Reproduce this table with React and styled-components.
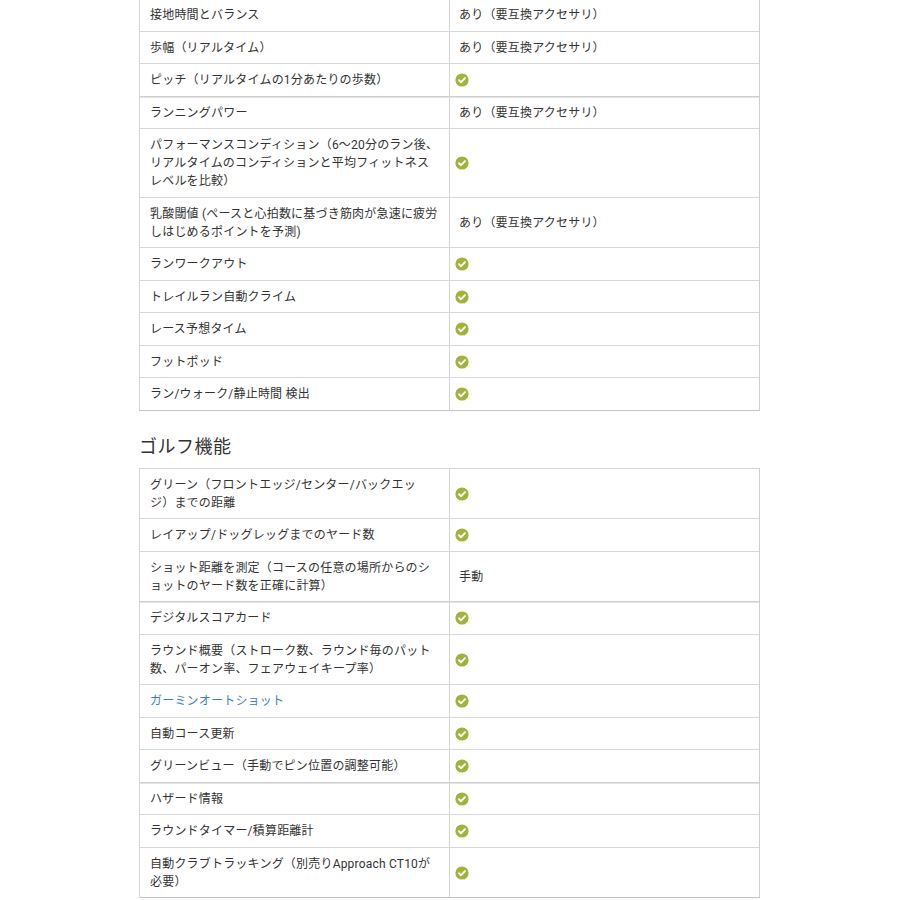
import styled, { createGlobalStyle } from "styled-components"

const GlobalStyle = createGlobalStyle`
    body {
        margin: 0;
        background: #fff;
        font-family: Roboto, "Noto Sans CJK JP", sans-serif;
        color: #333;
    }
`

// line breaks follow the original page's wrapping
const running = [
    { label: "接地時間とバランス", value: "あり（要互換アクセサリ）" },
    { label: "歩幅（リアルタイム）", value: "あり（要互換アクセサリ）" },
    { label: "ピッチ（リアルタイムの1分あたりの歩数）", value: true },
    { label: "ランニングパワー", value: "あり（要互換アクセサリ）", split: true },
    { label: "パフォーマンスコンディション（6〜20分のラン後、\nリアルタイムのコンディションと平均フィットネス\nレベルを比較）", value: true },
    { label: "乳酸閾値 (ペースと心拍数に基づき筋肉が急速に疲労\nしはじめるポイントを予測)", value: "あり（要互換アクセサリ）" },
    { label: "ランワークアウト", value: true },
    { label: "トレイルラン自動クライム", value: true },
    { label: "レース予想タイム", value: true },
    { label: "フットポッド", value: true },
    { label: "ラン/ウォーク/静止時間 検出", value: true },
]

const golf = [
    { label: "グリーン（フロントエッジ/センター/バックエッ\nジ）までの距離", value: true },
    { label: "レイアップ/ドッグレッグまでのヤード数", value: true },
    { label: "ショット距離を測定（コースの任意の場所からのシ\nョットのヤード数を正確に計算）", value: "手動" },
    { label: "デジタルスコアカード", value: true, split: true },
    { label: "ラウンド概要（ストローク数、ラウンド毎のパット\n数、パーオン率、フェアウェイキープ率）", value: true },
    { label: "ガーミンオートショット", value: true, link: true },
    { label: "自動コース更新", value: true },
    { label: "グリーンビュー（手動でピン位置の調整可能）", value: true },
    { label: "ハザード情報", value: true, split: true },
    { label: "ラウンドタイマー/積算距離計", value: true },
    { label: "自動クラブトラッキング（別売りApproach CT10が\n必要）", value: true },
]

const Page = styled.div`
    width: 621px;
    margin: -2px 0 0 139px;
`

const Table = styled.div`
    border: 1px solid #d4d4d4;
    border-bottom-color: #c4c4c4;
    border-right-color: #cfcfcf;
`

const Row = styled.div`
    display: grid;
    grid-template-columns: 309px 1fr;
    border-top: 1px solid ${props => props.split ? "#cfcfcf" : "#d8d8d8"};
    box-shadow: ${props => props.split ? "inset 0 1px 0 #e4e4e4" : "none"};
    &:first-child {
        border-top: none;
    }
`

const Cell = styled.div`
    display: flex;
    align-items: center;
    padding: 7px 4px 6.5px 10px;
    font-size: 12px;
    line-height: 18px;
    letter-spacing: 0.2px;
    color: #333;
    white-space: pre-line;
    & + & {
        border-left: 1px solid #d4d4d4;
        padding-left: 9px;
    }
`

const Link = styled.a`
    color: #3b7fbf;
    text-decoration: none;
`

const Heading = styled.h2`
    margin: 24px 0 9px;
    font-size: 18px;
    font-weight: 400;
    line-height: 24px;
    color: #333;
    letter-spacing: 0.5px;
`

const CheckIcon = styled.svg`
    margin-left: -4px;
    flex: none;
`

const Check = () => (
    <CheckIcon width="14" height="14" viewBox="0 0 14 14">
        <circle cx="7" cy="7" r="6.6" fill="#a2b23a" />
        <path d="M4 7.2 L6.1 9.2 L10 5.1" fill="none" stroke="#fff" strokeWidth="1.9" strokeLinecap="round" strokeLinejoin="round" />
    </CheckIcon>
)

const FeatureTable = (props) => (
    <Table>
        {props.rows.map(row => (
            <Row key={row.label} split={row.split}>
                <Cell>{row.link ? <Link href="#">{row.label}</Link> : row.label}</Cell>
                <Cell>{row.value === true ? <Check /> : row.value}</Cell>
            </Row>
        ))}
    </Table>
)

const App = () => (
    <Page>
        <GlobalStyle />
        <FeatureTable rows={running} />
        <Heading>ゴルフ機能</Heading>
        <FeatureTable rows={golf} />
    </Page>
)

export default App
